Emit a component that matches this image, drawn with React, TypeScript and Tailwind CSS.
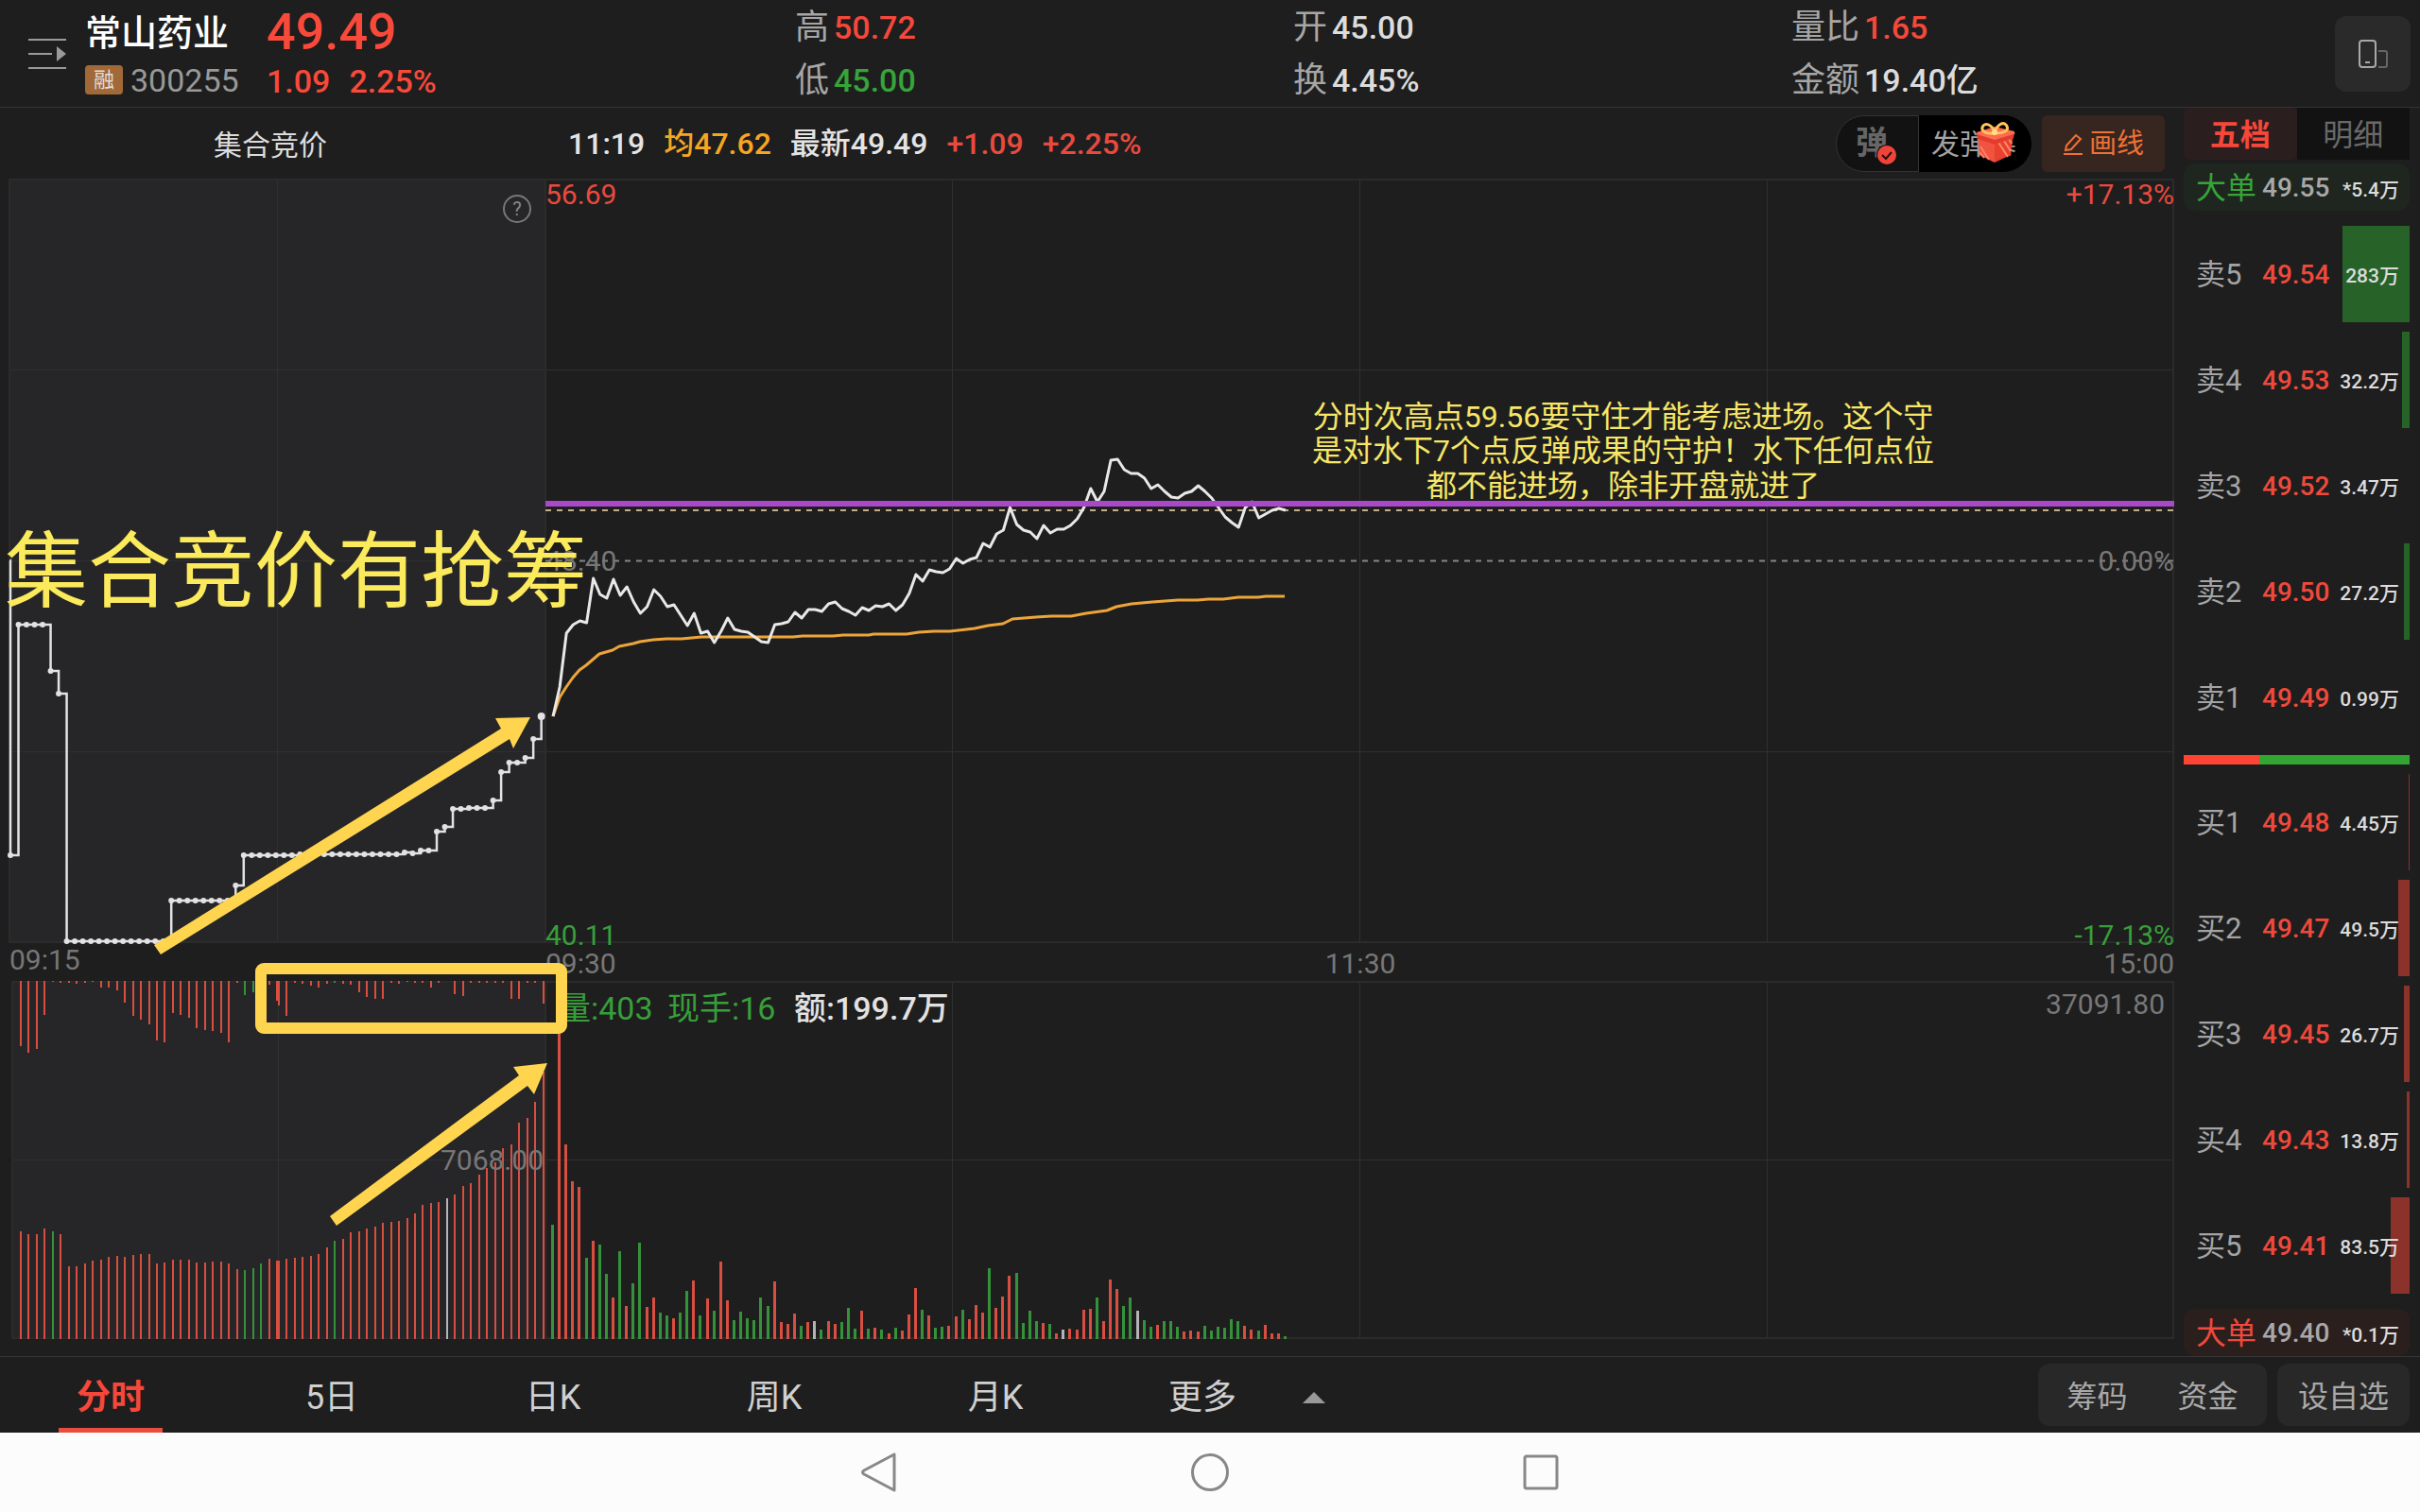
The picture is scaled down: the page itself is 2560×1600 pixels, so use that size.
import clsx from "clsx";

type Level = { label: string; price: string; volume: string; bar: number };

const asks: Level[] = [
  { label: "卖5", price: "49.54", volume: "283万", bar: 71 },
  { label: "卖4", price: "49.53", volume: "32.2万", bar: 8 },
  { label: "卖3", price: "49.52", volume: "3.47万", bar: 0 },
  { label: "卖2", price: "49.50", volume: "27.2万", bar: 6 },
  { label: "卖1", price: "49.49", volume: "0.99万", bar: 0 },
];

const bids: Level[] = [
  { label: "买1", price: "49.48", volume: "4.45万", bar: 1 },
  { label: "买2", price: "49.47", volume: "49.5万", bar: 12 },
  { label: "买3", price: "49.45", volume: "26.7万", bar: 6 },
  { label: "买4", price: "49.43", volume: "13.8万", bar: 3 },
  { label: "买5", price: "49.41", volume: "83.5万", bar: 20 },
];

const stats = [
  [
    { label: "高", value: "50.72", color: "text-[#f5483b]" },
    { label: "低", value: "45.00", color: "text-[#36a438]" },
  ],
  [
    { label: "开", value: "45.00", color: "text-[#dcdcdc]" },
    { label: "换", value: "4.45%", color: "text-[#dcdcdc]" },
  ],
  [
    { label: "量比", value: "1.65", color: "text-[#f5483b]" },
    { label: "金额", value: "19.40亿", color: "text-[#dcdcdc]" },
  ],
];

// one value per minute from 09:30
const price = [
  758, 727, 670, 661, 657, 659, 612, 629, 633, 613, 630, 621, 637, 649, 642, 624, 631, 642, 640, 651, 662, 649,
  670, 668, 680, 668, 654, 666, 668, 669, 674, 679, 680, 661, 660, 658, 648, 654, 645, 645, 647, 639, 637, 644,
  647, 651, 643, 646, 641, 642, 639, 646, 640, 628, 608, 615, 603, 605, 606, 602, 591, 596, 592, 590, 575, 579,
  565, 561, 537, 555, 561, 563, 570, 556, 564, 560, 560, 556, 549, 537, 517, 531, 520, 487, 486, 497, 501, 501,
  506, 517, 513, 520, 526, 527, 522, 520, 514, 520, 527, 537, 547, 553, 558, 537, 531, 548, 544, 540, 538, 540,
];

const average =
  "585,758 592,738 599,727 606,717 613,709 620,704 634,692 648,688 655,684 670,681 677,679 691,677 705,676 721,676 742,674 839,674 849,673 881,673 892,672 919,672 924,671 959,671 972,669 988,668 1005,668 1031,665 1045,662 1061,660 1071,655 1096,653 1112,652 1133,652 1149,649 1171,646 1181,642 1197,639 1219,637 1246,635 1267,635 1278,634 1294,634 1310,632 1331,632 1339,631 1359,631";

// call auction: [y, number of samples]
const auctionRuns = [
  [905, 1], [661, 4], [710, 1], [734, 1], [996, 13], [953, 8], [937, 1], [905, 7], [904, 13], [902, 1], [903, 1],
  [900, 2], [880, 1], [875, 1], [856, 2], [855, 3], [847, 1], [817, 1], [807, 2], [802, 1], [782, 1], [758, 1],
];

const auctionDots = auctionRuns
  .flatMap(([y, n]) => Array.from({ length: n }, () => y))
  .map((y, i) => ({ x: 11 + i * 8.51, y }));

const auctionPath = auctionDots.map((d) => `H${d.x} V${d.y}`).join(" ");

// bar heights, suffix g = down, w = flat
const volumes =
  "121g 378 206 167 161 86g 104 100g 69g 44 93g 35 59g 102g 34 44 28g 25g 22 28g 51g 62 25g 43 30g 82 41 20g 29g 22g 20g 44g 35g 61 18 16 27 14g 18 19w 10g 19 16 18g 33g 11g 30 11g 12 10g 6 12g 9 26 54 31g 25 12g 13g 14 24 31g 21 36 28 75g 33 45 67 70g 17g 30g 19g 17 16g 6 10w 11 10 31 32 44g 19 63 53 35g 44g 30w 20g 13g 15 19g 19g 13g 8 9 8 14g 9g 13g 12g 21g 19g 14 10 9g 15 6 6 3g";

const matchedA =
  "114 111 111 117 114g 111 77 77 80 83 84 87 88 87 89 90 90 80 81 84 84 84 81 81 82 82 80 74 73g 75g 80g 85 83";
const matchedB =
  "83 85 86 87 88 90 97 104g 106 113 114 117 119 123 124 125 128 133 142 144 145 149w 153 162 165 174 181 187 202 206 229 234 251 283";
const unmatchedA =
  "69 76 72 36 1g 2 2 3 2 1 7 7 10 23 37 41 46 63 65 34 36 39 50 52 53 55 65 2 15g 12g 1g 4 21";
const unmatchedB =
  "26 37 2 3 5 7 3 2g 3 4 12 17 19 19 2 3 1 2 2 7 2 0 14 16 2 2 2 2 2 19 19 2 2 24";

function barColor(item: string) {
  if (item.endsWith("g")) return "#35923a";
  if (item.endsWith("w")) return "#b4b4b8";
  return "#d84e40";
}

function Bars({ data, x, step, top, width = 2 }: { data: string; x: number; step: number; top?: number; width?: number }) {
  return (
    <g>
      {data.split(" ").map((item, i) => {
        const h = parseInt(item, 10);
        return (
          <rect
            key={i}
            x={Math.round(x + i * step) - 1}
            y={top ?? 1417 - h}
            width={width}
            height={h}
            fill={barColor(item)}
          />
        );
      })}
    </g>
  );
}

function Chart() {
  return (
    <svg viewBox="10 189 2290 1229" className="block w-full h-auto overflow-visible" role="img" aria-label="分时">
      <rect x="10" y="190" width="567" height="807" fill="#262628" />
      <rect x="13" y="1039" width="564" height="378" fill="#262628" />

      <g fill="none" stroke="#303031" strokeWidth="1">
        <path d="M10 391.5H2299 M10 593.5H577 M10 795.5H2299" />
        <path d="M293.5 190V997 M1007.5 190V997 M1438.5 190V997 M1869.5 190V997" />
        <path d="M13 1227.5H2299 M294.5 1039V1417 M1007.5 1039V1417 M1438.5 1039V1417 M1869.5 1039V1417" />
      </g>
      <g fill="none" stroke="#2b2b2c" strokeWidth="2">
        <path d="M10 190H2299V997H10Z M577 190V997" />
        <path d="M13 1039H2299V1416H13Z M577 1039V1417" />
      </g>

      <Bars data={unmatchedA} x={22} step={8.47} top={1038} />
      <Bars data={unmatchedB} x={295} step={8.47} top={1038} />
      <Bars data={matchedA} x={22} step={8.47} />
      <Bars data={matchedB} x={295} step={8.47} />
      <Bars data={volumes} x={584} step={7.11} width={3} />

      <path d="M577 593.5H2299" stroke="#858585" strokeWidth="2" strokeDasharray="6 6" />
      <path d="M577 540H2299" stroke="#c8ae88" strokeWidth="2" strokeDasharray="6 6" />

      <g fontSize="30" fill="#777777">
        <text x="577" y="604">48.40</text>
        <text x="2300" y="604" textAnchor="end">0.00%</text>
        <text x="10" y="1026">09:15</text>
        <text x="577" y="1030">09:30</text>
        <text x="1439" y="1030" textAnchor="middle">11:30</text>
        <text x="2300" y="1030" textAnchor="end">15:00</text>
        <text x="2290" y="1073" textAnchor="end">37091.80</text>
        <text x="575" y="1238" textAnchor="end">7068.00</text>
        <text x="577" y="216" fill="#e94a3e">56.69</text>
        <text x="2300" y="216" textAnchor="end" fill="#e94a3e">+17.13%</text>
        <text x="577" y="1000" fill="#379f3a">40.11</text>
        <text x="2300" y="1000" textAnchor="end" fill="#379f3a">-17.13%</text>
      </g>
      <g fontSize="34">
        <text x="591" y="1079" fill="#379f3a">量:403</text>
        <text x="706" y="1079" fill="#379f3a">现手:16</text>
        <text x="840" y="1079" fontWeight="500" fill="#e2e2e2">额:199.7万</text>
      </g>

      <circle cx="547" cy="221" r="14" fill="none" stroke="#777" strokeWidth="2" />
      <text x="547" y="228" fontSize="20" textAnchor="middle" fill="#888">?</text>

      <polyline points={average} fill="none" stroke="#eda53a" strokeWidth="3" strokeLinejoin="round" />
      <polyline
        points={price.map((y, i) => `${585 + i * 7.11},${y}`).join(" ")}
        fill="none"
        stroke="#e8e8e8"
        strokeWidth="3"
        strokeLinejoin="round"
      />
      <path d={`M10.5 593 ${auctionPath}`} fill="none" stroke="#e2e2e4" strokeWidth="2.5" />
      {auctionDots.map((d, i) => (
        <circle key={i} cx={d.x} cy={d.y} r={i === 66 ? 4 : 3} fill="#e2e2e4" />
      ))}

      <path d="M577 533H2300" stroke="#a948c9" strokeWidth="6" />

      {/* hand-drawn notes */}
      <g fill="#ffd54f">
        <path d="M163 1000L530 771L524 760L561 759L543 792L539 782L170 1010Z" />
        <path d="M349 1287L549 1138L543 1129L579 1125L565 1158L558 1149L356 1297Z" />
      </g>
      <rect x="276" y="1025" width="318" height="63" rx="3" fill="none" stroke="#ffd54f" strokeWidth="12" />
      <text x="5" y="635" fontSize="88" fill="#fbea5c">集合竞价有抢筹</text>
      <g fontSize="32" fill="#f7e667" textAnchor="middle">
        <text x="1717" y="452">分时次高点59.56要守住才能考虑进场。这个守</text>
        <text x="1717" y="488">是对水下7个点反弹成果的守护！水下任何点位</text>
        <text x="1717" y="525">都不能进场，除非开盘就进了</text>
      </g>
    </svg>
  );
}

function BookTable({ rows, side }: { rows: Level[]; side: "ask" | "bid" }) {
  return (
    <table className="w-full table-fixed border-collapse">
      <tbody>
        {rows.map((row) => (
          <tr key={row.label} className="h-28">
            <td className="w-[83px] p-0 pt-[2px] pl-[13px] text-[31px] text-[#a4a4a4]">{row.label}</td>
            <td className="w-[77px] p-0 pt-[2px] text-[28px] font-medium text-[#f0493c]">{row.price}</td>
            <td className="relative p-0 pt-[6px] pr-[11px] text-right text-[21px] font-medium text-[#dcdcdc] whitespace-nowrap">
              <span
                className={clsx("absolute right-0 inset-y-[5px]", side === "ask" ? "bg-[#276328]" : "bg-[#8b322b]")}
                style={{ width: row.bar }}
              />
              <span className="relative">{row.volume}</span>
            </td>
          </tr>
        ))}
      </tbody>
    </table>
  );
}

function BigOrder({ price, volume, side }: { price: string; volume: string; side: "ask" | "bid" }) {
  return (
    <div
      className={clsx(
        "flex h-[50px] items-center rounded-xl pt-[2px] pl-[13px] pr-[11px]",
        side === "ask" ? "bg-[#1e261f]" : "bg-[#2b1f1e]"
      )}
    >
      <span className={clsx("w-[70px] text-[32px]", side === "ask" ? "text-[#36a438]" : "text-[#f0493c]")}>大单</span>
      <span className="text-[28px] font-medium text-[#a8a8a8]">{price}</span>
      <span className="ml-auto pt-[6px] text-[21px] font-medium text-[#dcdcdc]">{volume}</span>
    </div>
  );
}

function GiftIcon() {
  return (
    <svg viewBox="0 0 42 44" className="absolute left-[60px] top-[7px] h-11 w-[42px]" aria-hidden="true">
      <path d="M2 13L20 18V43L4 35Z" fill="#f0533f" />
      <path d="M20 18L40 12L37 35L20 43Z" fill="#e8412f" />
      <path d="M23 20L34 37M28 17L37 31M33 15L38 23" stroke="#ff8a66" strokeWidth="2" />
      <path d="M5 26L14 40M4 32L9 38" stroke="#ff8064" strokeWidth="2" />
      <path d="M1 11L20 5L41 10L40 17L20 24L2 18Z" fill="#ff6a50" />
      <path d="M2 18L20 24L40 17V13L20 19L1 13Z" fill="#e23c2e" />
      <path
        d="M20 12C8 13 5 8 8 4C12 0 19 5 20 12C21 5 28 -1 32 3C36 8 32 12 20 12Z"
        fill="none"
        stroke="#ffc45c"
        strokeWidth="3"
      />
      <circle cx="20" cy="11" r="3" fill="#ffe08a" />
    </svg>
  );
}

function Header() {
  return (
    <header className="flex h-[114px] items-center border-b border-[#343434] pr-[10px]">
      <div className="flex w-[841px] shrink-0 items-center pl-[30px]">
        <button aria-label="菜单">
          <svg viewBox="0 0 40 34" className="h-[34px] w-10" aria-hidden="true">
            <path d="M0 2H40M0 17H25M0 32H40" stroke="#9a9a9a" strokeWidth="2" />
            <path d="M30 9L40 17L30 25Z" fill="#9a9a9a" />
          </svg>
        </button>
        <div className="ml-5 flex w-[192px] flex-col">
          <h1 className="flex h-14 items-center pt-3 text-[38px] font-medium leading-none text-white">常山药业</h1>
          <div className="flex h-14 items-center gap-2">
            <span className="flex h-[31px] w-10 items-center justify-center rounded bg-[#a16838] text-[22px] leading-none text-[#dedede]">
              融
            </span>
            <span className="text-[34px] leading-none text-[#999]">300255</span>
          </div>
        </div>
        <div className="flex flex-col font-medium text-[#f8493a]">
          <span className="flex h-14 items-center pt-[10px] text-[54px] leading-none">49.49</span>
          <span className="flex h-14 items-center gap-5 pt-[2px] text-[34px] leading-none">
            <span>1.09</span>
            <span>2.25%</span>
          </span>
        </div>
      </div>
      <dl className="mr-[48px] grid grow grid-cols-3">
        {stats.map((column, i) => (
          <div key={i} className="flex flex-col">
            {column.map((s) => (
              <div key={s.label} className="flex h-14 items-center gap-[5px] leading-none">
                <dt className="text-[36px] text-[#a6a6a6]">{s.label}</dt>
                <dd className={clsx("text-[34px] font-medium", s.color)}>{s.value}</dd>
              </div>
            ))}
          </div>
        ))}
      </dl>
      <button className="flex size-20 items-center justify-center rounded-xl bg-[#2a2a2a]" aria-label="切换">
        <svg viewBox="0 0 32 32" className="size-8" fill="none" aria-hidden="true">
          <rect x="2" y="2" width="17" height="28" rx="3" stroke="#a8a8a8" strokeWidth="2" />
          <path d="M8 25H13" stroke="#a8a8a8" strokeWidth="2" />
          <path d="M22 13H29Q31 13 31 15V28Q31 30 29 30H22" stroke="#666" strokeWidth="2" />
        </svg>
      </button>
    </header>
  );
}

function ChartToolbar() {
  return (
    <div className="flex h-[75px] items-center pr-[10px]">
      <h2 className="w-[591px] shrink-0 pt-[3px] pl-[216px] text-[30px] text-[#dcdcdc]">集合竞价</h2>
      <div className="flex gap-5 text-[32px] font-medium whitespace-nowrap">
        <span className="text-[#e4e4e4]">11:19</span>
        <span className="text-[#f5a623]">均47.62</span>
        <span className="text-[#e4e4e4]">最新49.49</span>
        <span className="text-[#e94a3e]">+1.09</span>
        <span className="text-[#e94a3e]">+2.25%</span>
      </div>
      <div className="ml-auto flex h-[60px]">
        <button className="relative w-[88px] rounded-l-full border border-[#333] bg-[#121212] pl-5 text-left text-[34px] font-bold text-[#666]">
          弹
          <svg viewBox="0 0 22 22" className="absolute bottom-[6px] right-[22px] size-[22px]" aria-hidden="true">
            <circle cx="11" cy="11" r="11" fill="#121212" />
            <circle cx="11" cy="11" r="10" fill="#f0443a" />
            <path d="M6 11L10 15L16 8" fill="none" stroke="#26100e" strokeWidth="2" />
          </svg>
        </button>
        <button className="relative w-[119px] rounded-r-full bg-black pl-[13px] pt-[2px] text-left text-[30px] text-[#a2a2a2]">
          发弹幕
          <GiftIcon />
        </button>
        <button className="ml-[11px] flex w-[130px] items-center justify-center gap-[6px] rounded-md bg-[#37261f] pt-[3px] text-[29px] text-[#ef7136]">
          <svg viewBox="0 0 22 24" className="h-6 w-[22px]" fill="none" stroke="#ef7136" strokeWidth="2" aria-hidden="true">
            <path d="M4 13L14 2L19 6L9 17L3 18Z" />
            <path d="M1 22H21" />
          </svg>
          画线
        </button>
      </div>
    </div>
  );
}

function BottomBar() {
  return (
    <nav className="flex h-[81px] items-stretch border-t border-[#363636] pr-[11px] text-[36px] text-[#d0d0d0]">
      <button className="relative w-[234px] pt-[6px] font-bold text-[#f5483b]">
        分时
        <span className="absolute bottom-0 left-[62px] h-[5px] w-[110px] bg-[#ea4c3d]" />
      </button>
      {["5日", "日K", "周K", "月K"].map((tab) => (
        <button key={tab} className="w-[234px] pt-[6px]">
          {tab}
        </button>
      ))}
      <button className="flex items-center gap-[70px] pl-[66px] pt-[6px]">
        更多
        <svg viewBox="0 0 24 12" className="h-3 w-6" aria-hidden="true">
          <path d="M12 0L24 12H0Z" fill="#999" />
        </svg>
      </button>
      <div className="my-[7px] ml-auto flex gap-[11px] text-[32px] text-[#a8a8a8]">
        <div className="flex rounded-xl bg-[#282828]">
          <button className="w-[121px] pt-[3px] pl-1">筹码</button>
          <button className="w-[121px] pt-[3px] pr-1">资金</button>
        </div>
        <button className="w-[140px] rounded-xl bg-[#282828] pt-[3px]">设自选</button>
      </div>
    </nav>
  );
}

function SystemNav() {
  return (
    <div className="flex h-[84px] items-center justify-center gap-[310px] bg-[#fcfcfc]">
      <button aria-label="返回">
        <svg viewBox="0 0 40 44" className="h-11 w-10" fill="none" stroke="#888" strokeWidth="3" aria-hidden="true">
          <path d="M36 3V41L4 24Q1 22 4 20Z" strokeLinejoin="round" />
        </svg>
      </button>
      <button aria-label="主页">
        <svg viewBox="0 0 40 44" className="h-11 w-10" fill="none" stroke="#888" strokeWidth="3" aria-hidden="true">
          <circle cx="20" cy="22" r="18.5" />
        </svg>
      </button>
      <button aria-label="最近任务">
        <svg viewBox="0 0 40 44" className="h-11 w-10" fill="none" stroke="#888" strokeWidth="3" aria-hidden="true">
          <rect x="3" y="5" width="34" height="34" rx="2" />
        </svg>
      </button>
    </div>
  );
}

export default function App() {
  return (
    <div
      lang="zh-CN"
      className="flex min-h-screen flex-col bg-[#1e1e1e] font-[family-name:Roboto,'Noto_Sans_CJK_SC',sans-serif]"
    >
      <Header />
      <main className="flex grow gap-[10px] pr-[11px] pl-[10px]">
        <section className="min-w-0 grow">
          <ChartToolbar />
          <Chart />
        </section>
        <aside className="flex w-[239px] shrink-0 flex-col">
          <div className="mb-1 flex h-[55px] text-[32px]">
            <button className="w-1/2 rounded-lg bg-[#2b1e1e] pt-[3px] font-bold text-[#f5483b]">五档</button>
            <button className="w-1/2 bg-[#121212] pt-[3px] text-[#696969]">明细</button>
          </div>
          <BigOrder price="49.55" volume="*5.4万" side="ask" />
          <div className="mt-[11px]">
            <BookTable rows={asks} side="ask" />
          </div>
          <div className="my-[5px] flex h-[10px]">
            <span className="w-1/3 bg-[#ff4433]" />
            <span className="grow bg-[#33a532]" />
          </div>
          <BookTable rows={bids} side="bid" />
          <div className="mt-[11px]">
            <BigOrder price="49.40" volume="*0.1万" side="bid" />
          </div>
        </aside>
      </main>
      <BottomBar />
      <SystemNav />
    </div>
  );
}
